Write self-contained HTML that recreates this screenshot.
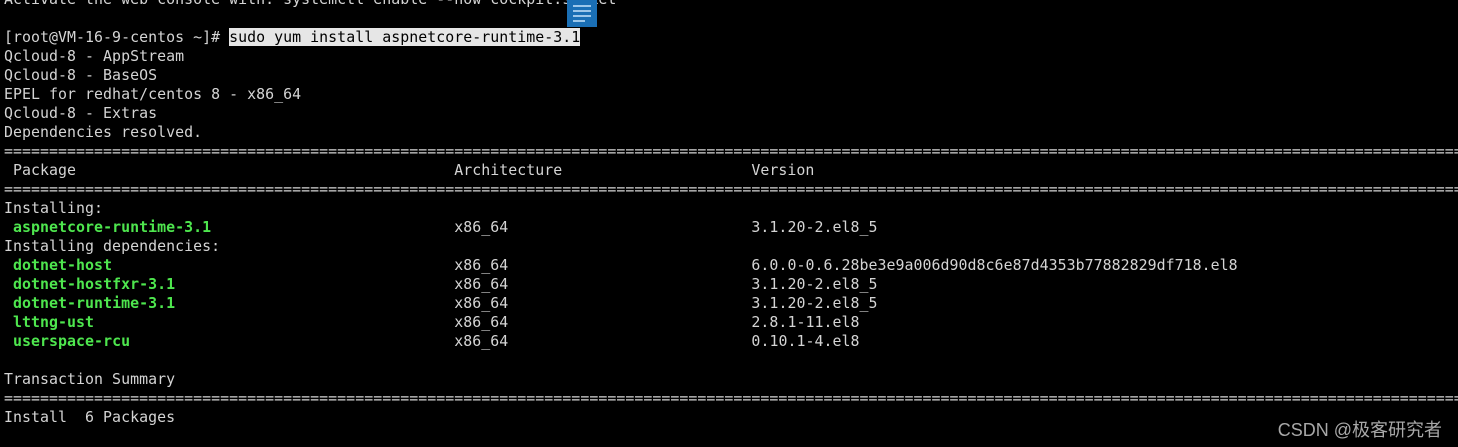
<!DOCTYPE html>
<html><head><meta charset="utf-8"><style>
html,body{margin:0;padding:0;background:#000;width:1458px;height:447px;overflow:hidden}
pre{margin:0;position:absolute;left:4px;top:-10px;font-family:"DejaVu Sans Mono","Liberation Mono",monospace;font-size:14.9px;letter-spacing:0.04px;line-height:19px;color:#d4d4d4;white-space:pre}
.g{color:#4ee64e;font-weight:bold}
.h{background:#e6e6e6;color:#000}
.icon{position:absolute;left:567px;top:0;width:30px;height:27px;background:#1a6fb5}
.icon i{position:absolute;left:6px;height:2px;background:#9cc7ea}
.wm{position:absolute;right:16px;top:416px;font-family:"Liberation Sans","Noto Sans CJK SC",sans-serif;font-size:18px;color:#a8a8a8}
</style></head><body>
<pre>Activate the web console with: systemctl enable --now cockpit.socket

[root@VM-16-9-centos ~]# <span class="h">sudo yum install aspnetcore-runtime-3.1</span>
Qcloud-8 - AppStream
Qcloud-8 - BaseOS
EPEL for redhat/centos 8 - x86_64
Qcloud-8 - Extras
Dependencies resolved.
==================================================================================================================================================================
 Package                                          Architecture                     Version
==================================================================================================================================================================
Installing:
 <span class="g">aspnetcore-runtime-3.1</span>                           x86_64                           3.1.20-2.el8_5
Installing dependencies:
 <span class="g">dotnet-host</span>                                      x86_64                           6.0.0-0.6.28be3e9a006d90d8c6e87d4353b77882829df718.el8
 <span class="g">dotnet-hostfxr-3.1</span>                               x86_64                           3.1.20-2.el8_5
 <span class="g">dotnet-runtime-3.1</span>                               x86_64                           3.1.20-2.el8_5
 <span class="g">lttng-ust</span>                                        x86_64                           2.8.1-11.el8
 <span class="g">userspace-rcu</span>                                    x86_64                           0.10.1-4.el8

Transaction Summary
==================================================================================================================================================================
Install  6 Packages</pre>
<div class="icon"><i style="top:5px;width:18px"></i><i style="top:10px;width:18px"></i><i style="top:15px;width:18px"></i><i style="top:20px;width:12px"></i></div>
<div class="wm">CSDN @极客研究者</div>
</body></html>
